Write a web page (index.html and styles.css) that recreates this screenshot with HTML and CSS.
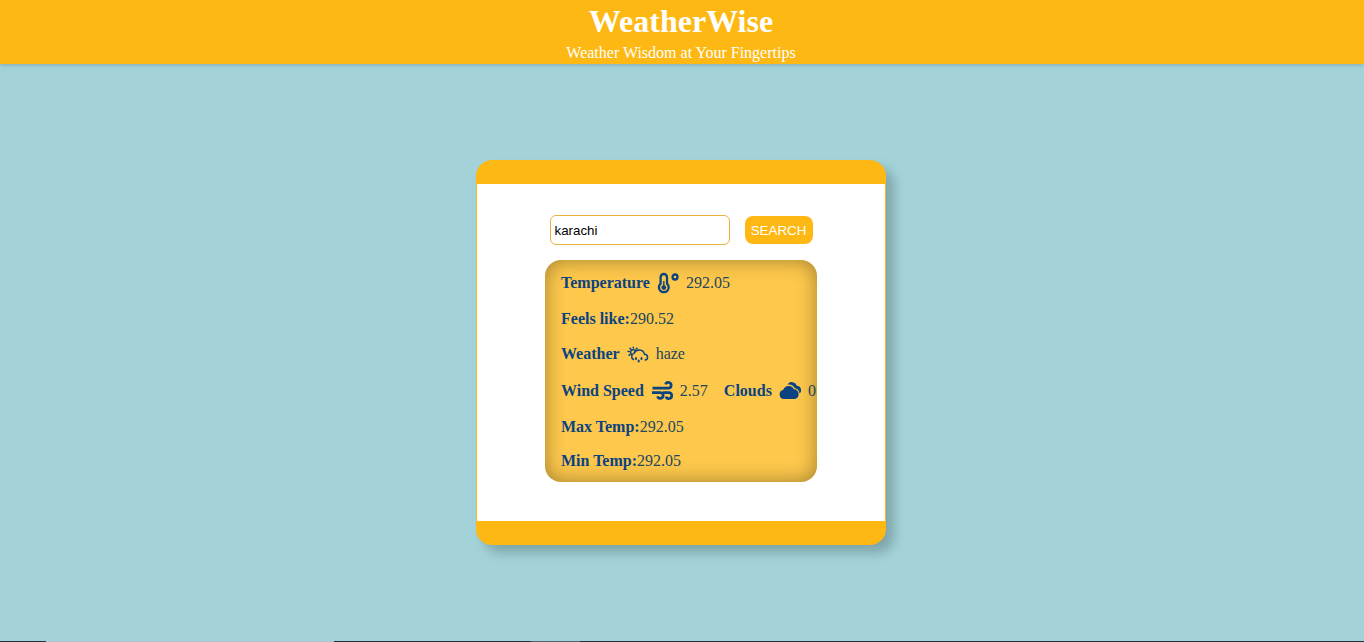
FILE: index.html
```html
<!DOCTYPE html>
<html lang="en">
<head>
<meta charset="utf-8">
<meta name="viewport" content="width=device-width, initial-scale=1">
<title>WeatherWise</title>
<link rel="stylesheet" href="styles.css">
</head>
<body>
<header class="header">
  <h1 class="title">WeatherWise</h1>
  <p class="tagline">Weather Wisdom at Your Fingertips</p>
</header>
<main class="main">
  <section class="card">
    <form class="search">
      <input class="search-input" type="text" value="karachi" aria-label="City">
      <button class="search-button" type="button">SEARCH</button>
    </form>
    <div class="result">
      <p class="row row-tall"><b>Temperature</b>
        <svg class="icon" viewBox="0 0 22 22" aria-hidden="true"><path d="M3.600 11.600V5.200a3.200 3.200 0 0 1 6.400 0v6.400a4.900 4.900 0 1 1-6.400 0z" fill="none" stroke="currentColor" stroke-width="2.300"/><circle cx="6.800" cy="15.600" r="2.400"/><path d="M6.800 9v6" stroke="currentColor" stroke-width="1.400"/><circle cx="18" cy="5" r="2.500" fill="none" stroke="currentColor" stroke-width="2.300"/></svg>
        <span>292.05</span></p>
      <p class="row row-plain"><b>Feels like:</b><span>290.52</span></p>
      <p class="row row-mid"><b>Weather</b>
        <svg class="icon" viewBox="0 0 22 22" aria-hidden="true"><g fill="none" stroke="currentColor" stroke-width="1.500" stroke-linecap="round" stroke-linejoin="round"><path d="M6.500 16.500A3.300 3.300 0 0 1 7 10.400a5.600 5.600 0 0 1 10.500.8 3 3 0 0 1 .8 5.900"/><path d="M4.500 11.400A2.700 2.700 0 1 1 8.600 8M6.300 4.200v.8M3 5.300l.8.8M1 8.600h1.200M10 5.200l-.8.8M2 12.300l.9-.7"/></g><path d="M9 13.700q2.200 2.300 0 3.500-2.200-1.200 0-3.500zM14.500 13.700q2.200 2.300 0 3.500-2.200-1.200 0-3.500zM11.700 16.300q2.200 2.300 0 3.500-2.200-1.200 0-3.500z"/></svg>
        <span>haze</span></p>
      <div class="row-group">
        <p class="row row-tall"><b>Wind Speed</b>
          <svg class="icon" viewBox="0 0 22 22" aria-hidden="true"><g fill="none" stroke="currentColor" stroke-width="2.700"><path d="M1.500 8.200h15.800a2.900 2.900 0 1 0-2.800-3.800"/><path d="M1 12.600h8.300a2.900 2.900 0 1 1-2.800 3.800"/><path d="M12 12.600h5.700a3 3 0 1 1-2.800 4"/></g></svg>
          <span>2.57</span></p>
        <p class="row row-tall"><b>Clouds</b>
          <svg class="icon" viewBox="0 0 22 22" aria-hidden="true"><path d="M5 19a4.500 4.500 0 0 1-.8-8.900A5.800 5.800 0 0 1 14.900 9.300a5 5 0 0 1 1.400 9.700z"/><path d="M8.500 4.500a5.200 5.200 0 0 1 9.300 1.200 4.400 4.400 0 0 1 2.700 7.800 6 6 0 0 0-4.500-5.200A7.300 7.300 0 0 0 8.500 4.500z"/></svg>
          <span>0</span></p>
      </div>
      <p class="row row-plain"><b>Max Temp:</b><span>292.05</span></p>
      <p class="row row-plain"><b>Min Temp:</b><span>292.05</span></p>
    </div>
  </section>
</main>
<footer class="strip"></footer>
</body>
</html>
```

FILE: styles.css
```css
* {
  box-sizing: border-box;
  margin: 0;
}

body {
  display: flex;
  flex-direction: column;
  min-height: 100vh;
  background: #a3d3d9;
  font-family: "Liberation Serif", "Times New Roman", serif;
  font-size: 16px;
}

.header {
  padding-right: 2px;
  background: #fdb813;
  color: #fff;
  text-align: center;
  box-shadow: 0 1px 4px rgba(0, 0, 0, 0.2);
}

.title {
  font-size: 32px;
  line-height: 42px;
}

.tagline {
  line-height: 22px;
}

.main {
  flex: 1;
  display: flex;
  align-items: center;
  justify-content: center;
  padding-right: 2px;
}

.card {
  width: 410px;
  max-width: 100%;
  padding: 31px 0 39px;
  display: flex;
  flex-direction: column;
  align-items: center;
  gap: 15px;
  background: #fff;
  border: solid #fdb813;
  border-width: 24px 1px;
  border-radius: 16px;
  box-shadow: 8px 8px 12px rgba(0, 0, 0, 0.22);
}

.search {
  display: flex;
  align-items: center;
  gap: 15px;
}

.search-input {
  width: 180px;
  height: 30px;
  padding: 4px;
  border: 1px solid #e9b13c;
  border-radius: 6px;
  background: #fff;
  color: #000;
  font-family: "Liberation Sans", Arial, sans-serif;
}

.search-button {
  min-width: 68px;
  height: 28px;
  padding: 0 6px;
  border: 0;
  border-radius: 8px;
  background: #fdb813;
  color: #fff;
  font-family: "Liberation Sans", Arial, sans-serif;
}

.result {
  width: 272px;
  padding: 12px 0 12px 16px;
  display: flex;
  flex-direction: column;
  gap: 16px;
  border-radius: 16px;
  background: #fdc84b;
  color: #0b4380;
  box-shadow: inset 0 0 20px rgba(0, 0, 0, 0.36);
}

.row {
  display: flex;
  align-items: center;
  gap: 7px;
  line-height: 18px;
  white-space: nowrap;
}

.row span {
  color: #21465f;
}

.row-plain {
  gap: 0;
}

.row-mid {
  height: 20px;
}

.row-tall {
  height: 22px;
}

.row-group {
  display: flex;
  gap: 16px;
}

.icon {
  flex: none;
  width: 22px;
  height: 22px;
  fill: currentColor;
}

.strip {
  height: 1px;
  background: linear-gradient(90deg, #203438 46px, #b9c0c3 46px 334px, #203438 334px 531px, #4d6468 531px 580px, #203438 580px);
}
```
